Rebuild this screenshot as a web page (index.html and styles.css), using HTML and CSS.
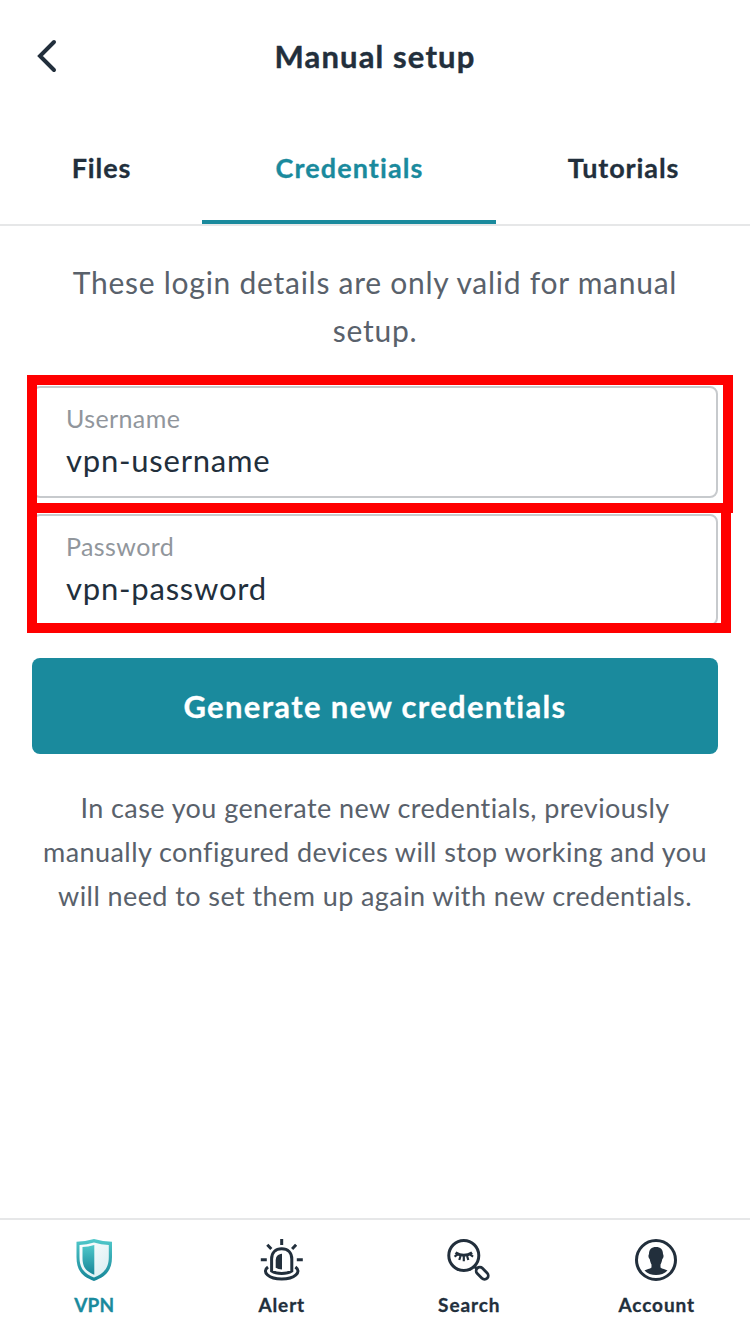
FILE: index.html
```html
<!DOCTYPE html>
<html lang="en">
<head>
<meta charset="utf-8">
<title>Manual setup</title>
<link rel="stylesheet" href="styles.css">
</head>
<body>
<div class="screen">
  <header class="header">
    <svg class="back" width="32" height="40" viewBox="0 0 32 40" fill="none"><path d="M22 6 8 20 22 34" stroke="#222f3c" stroke-width="4" stroke-linecap="round"/></svg>
    <h1 class="title">Manual setup</h1>
  </header>
  <nav class="tabs">
    <a class="tab">Files</a>
    <a class="tab active">Credentials</a>
    <a class="tab">Tutorials</a>
  </nav>
  <main class="content">
    <p class="intro">These login details are only valid for manual<br>setup.</p>
    <div class="field user"><span class="label">Username</span><span class="value">vpn-username</span></div>
    <div class="field pass"><span class="label">Password</span><span class="value">vpn-password</span></div>
    <button class="generate">Generate new credentials</button>
    <p class="note">In case you generate new credentials, previously<br>manually configured devices will stop working and you<br>will need to set them up again with new credentials.</p>
  </main>
  <footer class="bottom">
    <a class="item active">
      <svg width="48" height="48" viewBox="0 0 48 48"><defs><linearGradient id="g" x1="0" y1="0" x2="0" y2="1"><stop offset="0" stop-color="#50c8ca"/><stop offset="1" stop-color="#168698"/></linearGradient><linearGradient id="p" x1="0" y1="0" x2="1" y2="1"><stop offset="0" stop-color="#fff"/><stop offset="1" stop-color="#d7edf1"/></linearGradient></defs><path d="M6.500 5.700Q15 5.600 24 3Q33 5.600 42 5.700V21C42 34.500 36 40.500 24 45C12 40.500 6.500 34.500 6.500 21Z" fill="url(#g)"/><path d="M9.500 9Q17 8.600 24 6.500Q31 8.600 38.800 9V21C38.800 32 34 37.500 24 41.400C14 37.500 9.500 32 9.500 21Z" fill="url(#p)"/><path d="M24.300 9Q18 11 12.500 11V22C12.500 31 16 35.500 24.300 38.700Z" fill="url(#g)"/></svg>
      <span>VPN</span>
    </a>
    <a class="item">
      <svg width="48" height="48" viewBox="0 0 48 48" fill="none" stroke="#222f3c" stroke-width="3"><path d="M24.700 3V9M10.300 8.800 14.300 13M39.100 8.800 35.100 13M3.800 23.700H9.800M39.800 23.700H45.800M14.600 35V23C14.600 16.500 18.500 12.800 24.700 12.800S34.800 16.500 34.800 23V35Q31 37.500 24.700 37.500T14.600 35ZM11 31C4 36 12 43 24.700 43S45.400 36 38.400 31"/><path d="M25 17.700C20.800 18.200 18.700 20.500 18.700 24.500V31.700Q21 33.200 25 33.400Z" fill="#222f3c" stroke="none"/></svg>
      <span>Alert</span>
    </a>
    <a class="item">
      <svg width="48" height="48" viewBox="0 0 48 48" fill="none" stroke="#222f3c" stroke-width="3"><circle cx="18.800" cy="19.500" r="15"/><path d="M10.500 16.700Q18.800 22 27.100 16.700" stroke-width="3"/><path d="M9.500 20.700 12.500 18.700M14.300 24 15.500 20M18.800 25.300V20M23.300 24 22.100 20M28.100 20.700 25.100 18.700" stroke-width="2.200"/><path d="M29 30 32 33"/><rect x="30.200" y="33.600" width="14" height="7.400" rx="3.700" transform="rotate(45 37.200 37.300)" stroke-width="2.800"/></svg>
      <span>Search</span>
    </a>
    <a class="item">
      <svg width="48" height="48" viewBox="0 0 48 48"><circle cx="24" cy="24" r="19.500" fill="none" stroke="#222f3c" stroke-width="3"/><path d="M24 11C28.500 11 31 13.500 31 18C32 19.500 31.500 22 30.300 23C29.800 26 29 27.500 28.500 28.500V31.500C30 33 33.500 33.300 35.500 34.500C30 40.500 18 40.500 12.500 34.500C14.500 33.300 18 33 19.500 31.500V28.500C19 27.500 18.200 26 17.700 23C16.500 22 16 19.500 17 18C17 13.500 19.500 11 24 11Z" fill="#222f3c"/></svg>
      <span>Account</span>
    </a>
  </footer>
</div>
</body>
</html>
```
FILE: styles.css
```css
*, *::after { box-sizing: border-box; }
body { margin: 0; background: #fff; color: #222f3c; font-family: Lato, sans-serif; font-variant-ligatures: none; }
.screen { height: 1334px; display: flex; flex-direction: column; }
.header { height: 112px; display: grid; grid-template-columns: 64px 1fr 64px; align-items: center; padding: 0 32px; }
.back { display: block; }
.title { margin: 0; text-align: center; font-size: 31px; line-height: 40px; font-weight: 700; letter-spacing: 1.15px; -webkit-text-stroke: 0.4px; }
.tabs { height: 114px; display: grid; grid-template-columns: 202px 294px 254px; border-bottom: 2px solid #e6e7e8; }
.tab { height: 112px; padding-left: 1px; text-align: center; font-size: 27px; font-weight: 700; line-height: 112px; letter-spacing: 0.9px; -webkit-text-stroke: 0.3px; }
.tab.active { color: #1a8a9d; letter-spacing: 1.1px; border-bottom: 4px solid #1a8a9d; }
.content { flex: 1; padding: 32px 32px 0; display: flex; flex-direction: column; }
.intro { margin: 0 -8px 32px; text-align: center; font-size: 30px; line-height: 48px; letter-spacing: 0.74px; color: #59616b; }
.field { height: 112px; margin-bottom: 16px; border: 2px solid #c7cacd; border-radius: 8px; padding: 12px 32px; display: flex; flex-direction: column; align-items: flex-start; position: relative; }
.field::after { content: ""; position: absolute; border: 10px solid #f00; left: -7px; top: -13px; width: 706px; height: 138px; }
.pass::after { width: 704px; height: 130px; }
.label { font-size: 25px; line-height: 36px; letter-spacing: 0.4px; color: #91969c; }
.value { font-size: 31px; line-height: 48px; letter-spacing: 0.78px; }
.generate { height: 96px; margin: 16px 0 32px; border: 0; border-radius: 8px; background: #1a8a9d; color: #fff; font: 700 31px Lato, sans-serif; font-variant-ligatures: none; letter-spacing: 1.32px; -webkit-text-stroke: 0.3px; }
.note { margin: 0 -16px; text-align: center; font-size: 27px; line-height: 44px; letter-spacing: 0.42px; color: #59616b; white-space: nowrap; }
.bottom { height: 116px; border-top: 2px solid #e6e7e8; display: grid; grid-template-columns: repeat(4, 1fr); }
.item { display: flex; flex-direction: column; align-items: center; padding-top: 16px; font-size: 19px; font-weight: 700; line-height: 24px; letter-spacing: 0.9px; -webkit-text-stroke: 0.3px; }
.item svg { margin-bottom: 9px; }
.item span { padding-left: 1px; }
.item.active { color: #1a8a9d; letter-spacing: 0.1px; }
```
